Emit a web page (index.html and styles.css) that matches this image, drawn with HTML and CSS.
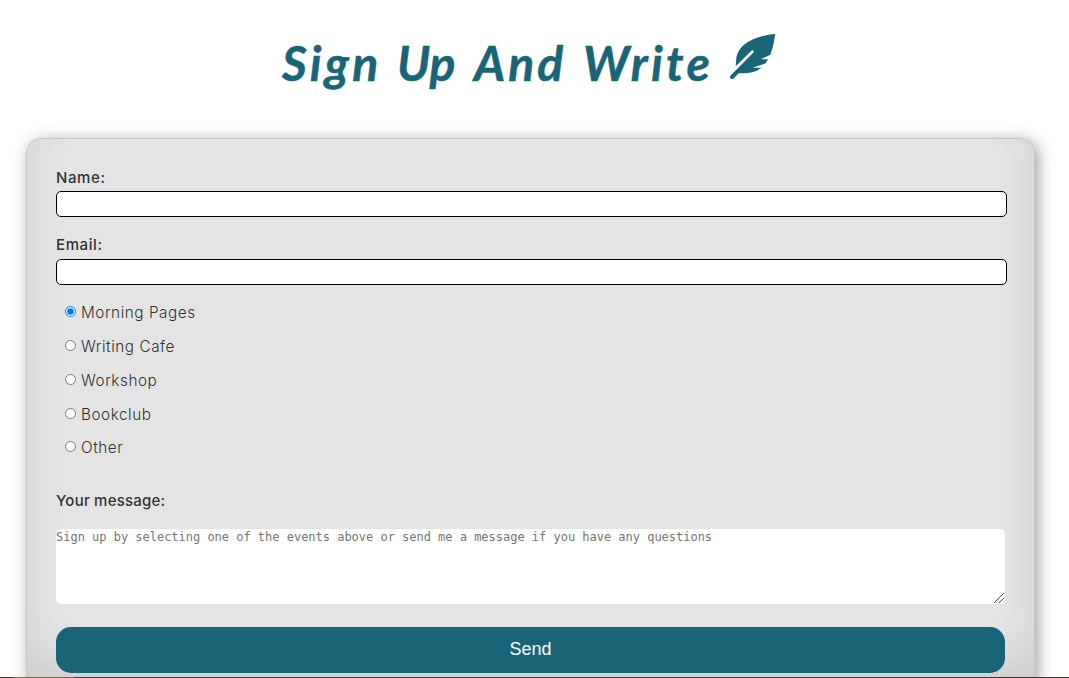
FILE: index.html
```html
<!DOCTYPE html>
<html lang="en">
<head>
<meta charset="utf-8">
<title>Sign Up And Write</title>
<link rel="stylesheet" href="styles.css">
</head>
<body>
<h1 class="title">
  <span class="w-sign">Sign</span> <span class="w-up">Up</span> <span class="w-and">And</span> <span class="w-write">Write</span>
  <svg class="feather" viewBox="0 0 512 512" aria-hidden="true"><path d="M512 0C460.22 3.56 96.44 38.2 71.01 287.61c-3.09 26.66-4.84 53.44-5.99 80.24l178.87-178.69c6.25-6.25 16.4-6.25 22.65 0s6.25 16.38 0 22.63L7.04 471.03c-9.38 9.37-9.38 24.57 0 33.94 9.38 9.37 24.59 9.37 33.98 0l57.13-57.07c42.09-.14 84.15-2.53 125.96-7.36 53.48-5.44 97.02-26.47 132.58-56.54H255.74l146.79-48.88c11.25-14.89 21.37-30.71 30.45-47.12h-81.14l106.54-53.21C500.29 132.86 510.19 26.26 512 0z"/></svg>
</h1>
<form class="card">
  <label class="label t-name" for="name">Name:</label>
  <input class="field" id="name" type="text">
  <label class="label label-email" for="email">Email:</label>
  <input class="field" id="email" type="text">
  <div class="options">
    <label class="option"><input type="radio" name="event" checked><span>Morning Pages</span></label>
    <label class="option"><input type="radio" name="event"><span>Writing Cafe</span></label>
    <label class="option"><input type="radio" name="event"><span>Workshop</span></label>
    <label class="option"><input type="radio" name="event"><span>Bookclub</span></label>
    <label class="option"><input type="radio" name="event"><span>Other</span></label>
  </div>
  <label class="label label-message" for="message">Your message:</label>
  <div class="message-box">
    <textarea class="message" id="message" placeholder="Sign up by selecting one of the events above or send me a message if you have any questions"></textarea>
    <svg class="grip" viewBox="0 0 12 12" aria-hidden="true"><path d="M1 11L11 1M6 11l5-5"/></svg>
  </div>
  <button class="send" type="button">Send</button>
</form>
<div class="edge"></div>
</body>
</html>
```
FILE: styles.css
```css
* { box-sizing: border-box; }
html, body { height: 100%; overflow: hidden; }
body { margin: 0; background: #fff; color: #333; font-family: Inter, "Open Sans", sans-serif; }
.title {
  display: flex; height: 138px; margin: 0; padding: 34px 0 0 282px;
  color: #196577; font: italic 700 48px/57px Lato, sans-serif; white-space: nowrap;
  -webkit-text-stroke: 0.5px #196577;
}
.title span { flex: none; }
.w-sign { width: 115px; letter-spacing: 3.2px; }
.w-up { width: 77px; letter-spacing: 0; }
.w-and { width: 109px; letter-spacing: 3px; }
.w-write { width: 147px; letter-spacing: 3.3px; }
.feather { flex: none; width: 45px; height: 45px; fill: currentColor; }
.card {
  display: flex; flex-direction: column; width: 1009px; height: 552px; margin-left: 26px;
  padding: 28px 27px 0 29px; border: 1px solid #c8c8c8; border-radius: 15px; background: #e4e4e4;
  box-shadow: 3px 3px 16px rgba(0,0,0,.38), inset 0 -30px 50px -10px rgba(0,0,0,.12);
}
.label { height: 24px; font-size: 15px; font-weight: 500; line-height: 22px; letter-spacing: .22px; }
.t-name { letter-spacing: .6px; }
.label-email { margin-top: 17px; height: 25px; letter-spacing: .6px; }
.label-message { margin-top: 24px; height: 39px; }
.field { flex: none; width: 951px; height: 26px; margin: 0; border: 1px solid #000; border-radius: 5px; background: #fff; }
.options { height: 181px; padding: 11px 0 0 9px; }
.option { display: flex; height: 33.85px; gap: 5px; font-size: 15.3px; font-weight: 300; line-height: 34px; letter-spacing: .54px; }
.option input { flex: none; width: 11px; height: 11px; margin: 10px 0 0; }
.message-box { position: relative; flex: none; width: 949px; height: 75px; }
.message {
  display: block; width: 100%; height: 100%; margin: 0; padding: 0; border: 0; border-radius: 5px;
  font: 12px/17px "DejaVu Sans Mono", monospace; letter-spacing: -.015px; resize: none;
}
.message::placeholder { color: #757575; }
.grip { position: absolute; right: 0; bottom: 0; width: 12px; height: 12px; fill: none; stroke: #444; stroke-width: 1; }
.send {
  flex: none; width: 949px; height: 46px; margin-top: 23px; padding: 0 0 2px; border: 0; border-radius: 15px;
  background: #196577; color: #fff; font: 18px "Liberation Sans", Arial, sans-serif;
}
.edge {
  position: fixed; left: 0; right: 0; bottom: 0; height: 1px;
  background: linear-gradient(90deg, #443c16 13px, #86701c 13px, #86701c 74px, #443c16 74px);
}
```
